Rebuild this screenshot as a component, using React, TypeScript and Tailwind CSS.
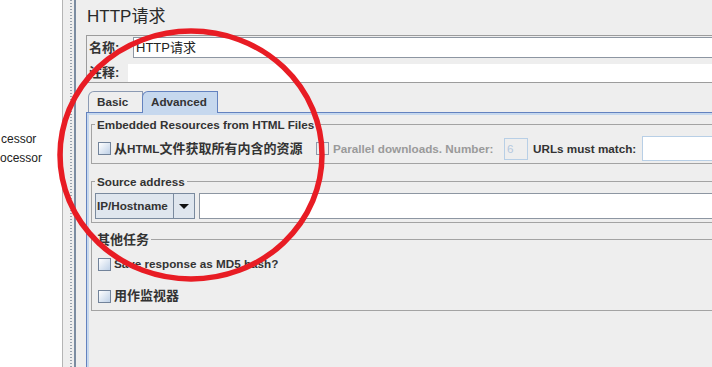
import React from "react";

const sans = "font-['Liberation_Sans','Noto_Sans_CJK_SC',sans-serif]";

const Check = ({ disabled }: { disabled?: boolean }) => (
  <span
    className={`inline-block h-[13px] w-[13px] shrink-0 border ${
      disabled
        ? "border-[#8e9aab] bg-[#eeeeee]"
        : "border-[#72839a] bg-linear-to-br from-white to-[#bfd1e7]"
    }`}
  />
);

const Cjk = ({ children }: { children: React.ReactNode }) => (
  <span className="text-[13px]">{children}</span>
);

const App = () => {
  return (
    <div
      className={`relative flex h-[367px] w-[712px] overflow-hidden bg-[#eeeeee] text-[#333333] ${sans}`}
    >
      {/* tree (clipped) */}
      <div className="w-[62px] shrink-0 bg-white pt-[130px] text-[12px] leading-[19px] text-[#222222]">
        <div className="whitespace-nowrap pl-px">cessor</div>
        <div className="whitespace-nowrap">ocessor</div>
      </div>

      {/* splitter */}
      <div className="flex shrink-0">
        <div className="w-px bg-[#b4b4b4]" />
        <div className="w-[7px] bg-[#eeeeee]" />
        <div className="w-[2px] bg-[repeating-linear-gradient(to_bottom,#98a2ae_0_1px,transparent_1px_3px)]" />
        <div className="w-[2px] bg-[#eeeeee]" />
        <div className="w-[2px] bg-[#7b8ca1]" />
      </div>

      {/* main panel */}
      <div className="flex w-[700px] shrink-0 flex-col pl-[10px]">
        <div className="pl-px pt-[7px] text-[17px] leading-[20px] text-[#2a2a2a]">
          HTTP请求
        </div>

        {/* name / comment */}
        <div className="mt-[8px] flex flex-col border-b border-l border-t border-[#9c9c9c] pl-px pt-px">
          <div className="flex h-[21px] items-center">
            <div className="w-[45px] pl-px text-[13px] font-bold">名称:</div>
            <div className="flex h-full flex-1 items-center border border-[#8d96a2] bg-white pl-[2px] text-[13px] text-[#222222]">
              HTTP请求
            </div>
          </div>
          <div className="mt-[6px] flex h-[18px] items-center">
            <div className="w-[40px] pl-px text-[13px] font-bold">注释:</div>
            <div className="h-full flex-1 bg-white" />
          </div>
        </div>

        {/* tabs */}
        <div className="mt-[8px] flex items-end pl-[2px] text-[11.7px] font-bold">
          <div className="flex h-[21px] w-[55px] items-center rounded-tl-[6px] border-l border-r border-t border-[#8b9ab3] pl-[8px]">
            Basic
          </div>
          <div className="relative z-10 -mb-px -ml-px flex h-[22px] w-[76px] items-center rounded-tl-[6px] border-l border-r border-t border-[#6382bf] bg-[#c6d8ee] pb-px pl-[8px]">
            Advanced
          </div>
        </div>

        <div className="flex-1 border-l border-t border-[#6382bf]">
          <div className="flex h-full flex-col border-l-2 border-t-2 border-[#c6d8ee] bg-[#eeeeee] pl-[2px]">
            {/* embedded resources */}
            <fieldset className="mt-[2px] border border-[#a3a3a3] pb-[2px] pl-[3px] pt-[4px]">
              <legend className="px-[2px] text-[11.7px] font-bold leading-[15px]">
                Embedded Resources from HTML Files
              </legend>
              <div className="flex h-[25px] items-center whitespace-nowrap text-[11.7px] font-bold">
                <div className="ml-[3px] flex w-[218px] items-center gap-[3px]">
                  <Check />
                  <span>
                    <Cjk>从</Cjk>HTML<Cjk>文件获取所有内含的资源</Cjk>
                  </span>
                </div>
                <div className="flex w-[188px] items-center gap-[4px] text-[#9a9a9a]">
                  <Check disabled />
                  <span>Parallel downloads. Number:</span>
                </div>
                <div className="flex h-[22px] w-[24px] items-center border border-[#b8cfe6] pl-[2px] font-normal text-[#b4c8de]">
                  6
                </div>
                <div className="ml-[5px] w-[109px]">URLs must match:</div>
                <div className="h-[25px] flex-1 border border-[#b8cfe6] bg-white" />
              </div>
            </fieldset>

            {/* source address */}
            <fieldset className="mt-[10px] border border-[#a3a3a3] pb-[3px] pl-[3px] pt-[4px]">
              <legend className="px-[2px] text-[11.7px] font-bold leading-[15px]">
                Source address
              </legend>
              <div className="flex h-[26px] items-stretch">
                <div className="flex w-[100px] border border-[#7a8a9e] bg-[#dfe6ee]">
                  <div className="flex flex-1 items-center pl-px text-[11.7px] font-bold">
                    IP/Hostname
                  </div>
                  <div className="flex w-[21px] items-center justify-center border-l border-[#7a8a9e]">
                    <svg width="10" height="5" viewBox="0 0 10 5">
                      <path d="M0 0H10L5 5Z" fill="#111111" />
                    </svg>
                  </div>
                </div>
                <div className="ml-[4px] flex-1 border border-[#8d96a2] bg-white" />
              </div>
            </fieldset>

            {/* other tasks */}
            <fieldset className="mt-[9px] border border-[#a3a3a3] pb-[2px] pl-[3px] pt-[5px]">
              <legend className="px-[2px] text-[13px] font-bold leading-[15px]">
                其他任务
              </legend>
              <div className="flex flex-col gap-[8px] text-[11.7px] font-bold">
                <div className="ml-[3px] flex h-[24px] items-center gap-[3px]">
                  <Check />
                  <span>Save response as MD5 hash?</span>
                </div>
                <div className="ml-[3px] flex h-[24px] items-center gap-[3px]">
                  <Check />
                  <Cjk>用作监视器</Cjk>
                </div>
              </div>
            </fieldset>
          </div>
        </div>
      </div>

      {/* red annotation circle */}
      <svg
        className="pointer-events-none absolute left-0 top-0"
        width="712"
        height="367"
        viewBox="0 0 712 367"
      >
        <ellipse
          cx="191"
          cy="155"
          rx="131"
          ry="124"
          fill="none"
          stroke="#e81c24"
          strokeWidth="5.5"
        />
      </svg>
    </div>
  );
};

export default App;
